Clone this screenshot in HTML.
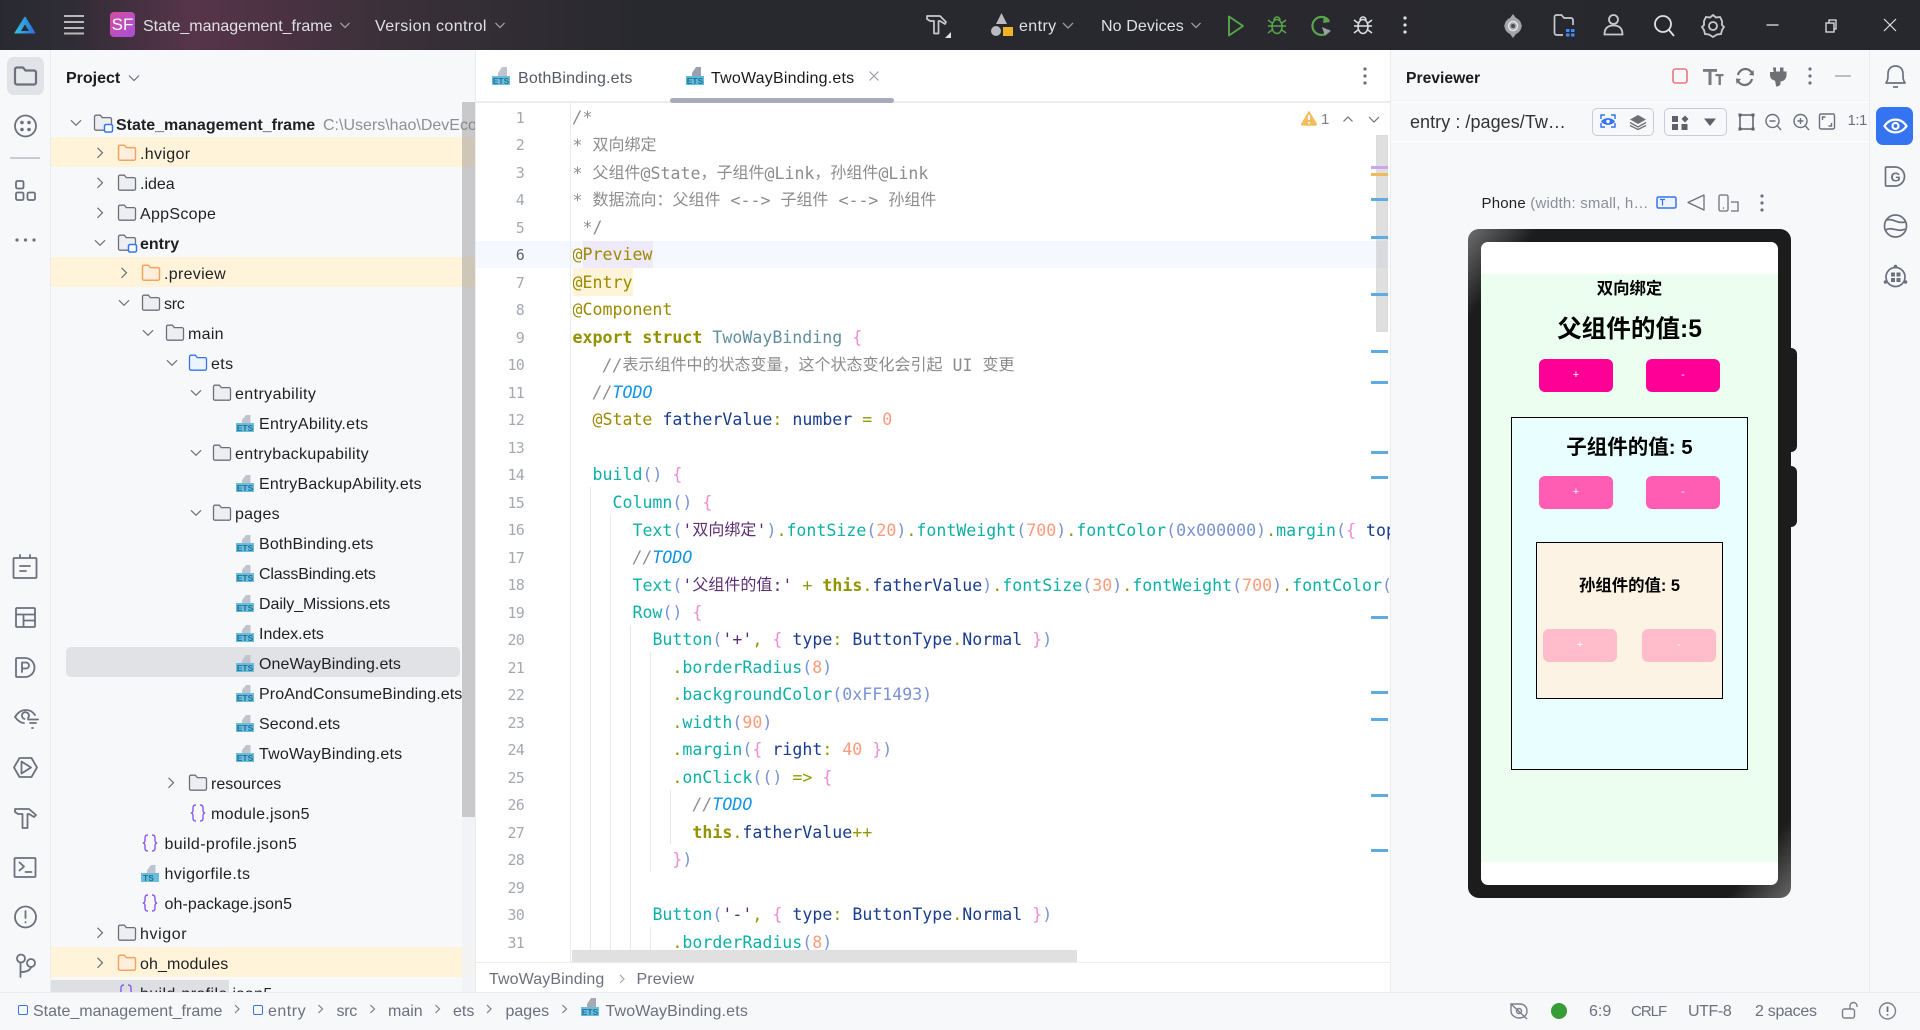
<!DOCTYPE html>
<html><head><meta charset="utf-8"><style>
html,body{margin:0;padding:0;width:1920px;height:1030px;overflow:hidden;background:#f7f8fa;font-family:"Liberation Sans","Noto Sans CJK SC",sans-serif;font-size:16px;color:#1f2024}
div{box-sizing:border-box}
.a{position:absolute}
.tx{position:absolute;white-space:pre;height:30px;line-height:30px}
.top{color:#dfe1e5}
.g{color:#6c707e}
.r{position:absolute;left:51px;width:424px;height:30px;background:#fff3d9}
#code{position:absolute;left:572.5px;top:103.5px;width:817px;height:859px;overflow:hidden;font-family:"DejaVu Sans Mono","Liberation Mono","Noto Sans CJK SC",monospace;font-size:16.6px;color:#1f2024}
.l{height:27.5px;line-height:27.5px;white-space:pre}
.z{font-family:"Noto Sans CJK SC",sans-serif;font-size:16px;position:relative;top:-1px}
.c{color:#8c8c8c}.t{color:#0f94e6;font-style:italic}.cs{color:#8c8c8c;font-style:italic}
.d{color:#9c8a00}.k{color:#939300;font-weight:bold}.tn{color:#5f8f9f}.p{color:#ee8cd0}
.f{color:#0eb0a6}.n{color:#1a3c8f}.o{color:#8f9a00}.m{color:#ff9b7a}.b{color:#7a93d8}.s{color:#5c2d73}
.ln{position:absolute;left:490px;width:34px;text-align:right;height:27.5px;line-height:28px;font-family:"DejaVu Sans Mono",monospace;font-size:15px;letter-spacing:-.8px;color:#a4a8b2}
.mk{position:absolute;left:1371px;width:17px;height:3px;background:#5dade2}
.btn{position:absolute;width:74px;height:33px;border-radius:6px;color:#fff;font-size:11px;line-height:32px;text-align:center}
.ph{position:absolute;font-weight:bold;color:#000;text-align:center;white-space:pre;font-family:"Liberation Sans","Noto Sans CJK SC",sans-serif}
</style></head><body>

<!-- top bar -->
<div class="a" style="left:0;top:0;width:1920px;height:50px;background:linear-gradient(90deg,#292a31 0,#2f2c35 70px,#57344a 190px,#3a3039 390px,#28292f 640px,#27282e 100%)"></div>
<div class="a" style="left:110px;top:12px;width:25px;height:25px;border-radius:4px;background:linear-gradient(135deg,#d44f9f,#a64fd8);color:#fff;text-align:center;line-height:25px;font-size:17px">SF</div>
<div class="tx top" style="left:143px;top:12px">State_management_frame</div>
<div class="tx top" style="left:375px;top:12px;letter-spacing:.4px">Version control</div>
<div class="tx top" style="left:1019px;top:12px;letter-spacing:.4px">entry</div>
<div class="tx top" style="left:1101px;top:12px;letter-spacing:.1px">No Devices</div>

<!-- project panel -->
<div class="a" style="left:0;top:0;width:475px;height:992px;overflow:hidden">
<div class="a" style="left:51px;top:50px;width:424px;height:942px;background:#f7f8fa"></div>
<div class="r" style="top:137.3px"></div><div class="r" style="top:257.3px"></div><div class="r" style="top:947px"></div>
<div class="a" style="left:66px;top:647px;width:394px;height:30px;border-radius:5px;background:#e1e2e6"></div>
<div class="a" style="left:51px;top:980px;width:178px;height:12px;background:#dedfe3"></div>
<div class="tx" style="left:66px;top:64px;font-weight:bold;color:#1a1b1f">Project</div>
<div class="tx" style="left:116px;top:111px;font-weight:bold">State_management_frame</div>
<div class="tx" style="left:323px;top:111px;color:#8c8f98">C:\Users\hao\DevEco</div>
<div class="tx" style="left:140px;top:140px;letter-spacing:.35px">.hvigor</div>
<div class="tx" style="left:140px;top:170px">.idea</div>
<div class="tx" style="left:140px;top:200px;letter-spacing:.3px">AppScope</div>
<div class="tx" style="left:140px;top:230px;font-weight:bold">entry</div>
<div class="tx" style="left:164px;top:260px;letter-spacing:.3px">.preview</div>
<div class="tx" style="left:164px;top:290px;letter-spacing:-.3px">src</div>
<div class="tx" style="left:188px;top:320px;letter-spacing:.3px">main</div>
<div class="tx" style="left:211px;top:350px;letter-spacing:.4px">ets</div>
<div class="tx" style="left:235px;top:380px;letter-spacing:.4px">entryability</div>
<div class="tx" style="left:259px;top:410px;letter-spacing:.3px">EntryAbility.ets</div>
<div class="tx" style="left:235px;top:440px;letter-spacing:.33px">entrybackupability</div>
<div class="tx" style="left:259px;top:470px;letter-spacing:.22px">EntryBackupAbility.ets</div>
<div class="tx" style="left:235px;top:500px;letter-spacing:.25px">pages</div>
<div class="tx" style="left:259px;top:530px;letter-spacing:.16px">BothBinding.ets</div>
<div class="tx" style="left:259px;top:560px;letter-spacing:-.15px">ClassBinding.ets</div>
<div class="tx" style="left:259px;top:590px;letter-spacing:-.07px">Daily_Missions.ets</div>
<div class="tx" style="left:259px;top:620px">Index.ets</div>
<div class="tx" style="left:259px;top:650px;letter-spacing:.07px">OneWayBinding.ets</div>
<div class="tx" style="left:259px;top:680px;letter-spacing:.1px">ProAndConsumeBinding.ets</div>
<div class="tx" style="left:259px;top:710px;letter-spacing:.12px">Second.ets</div>
<div class="tx" style="left:259px;top:740px;letter-spacing:.2px">TwoWayBinding.ets</div>
<div class="tx" style="left:211px;top:770px">resources</div>
<div class="tx" style="left:211px;top:800px;letter-spacing:.3px">module.json5</div>
<div class="tx" style="left:164.5px;top:830px;letter-spacing:.38px">build-profile.json5</div>
<div class="tx" style="left:164.5px;top:860px;letter-spacing:.38px">hvigorfile.ts</div>
<div class="tx" style="left:164.5px;top:890px;letter-spacing:.08px">oh-package.json5</div>
<div class="tx" style="left:140px;top:920px;letter-spacing:.6px">hvigor</div>
<div class="tx" style="left:140px;top:950px;letter-spacing:.12px">oh_modules</div>
<div class="tx" style="left:140px;top:980px;letter-spacing:.38px">build-profile.json5</div>

<svg class="a" style="left:0;top:0" width="475" height="992" font-family="Liberation Sans">
<defs>
<g id="fo"><path d="M-8.5-6.3a1.5 1.5 0 0 1 1.5-1.5h4.3l2 2.4h7.7a1.5 1.5 0 0 1 1.5 1.5v9.6a1.5 1.5 0 0 1-1.5 1.5H-7a1.5 1.5 0 0 1-1.5-1.5z" fill="#edeef2" stroke="#6c707e" stroke-width="1.3"/></g>
<g id="fy"><path d="M-8.5-6.3a1.5 1.5 0 0 1 1.5-1.5h4.3l2 2.4h7.7a1.5 1.5 0 0 1 1.5 1.5v9.6a1.5 1.5 0 0 1-1.5 1.5H-7a1.5 1.5 0 0 1-1.5-1.5z" fill="#fdeedd" stroke="#f2a35e" stroke-width="1.5"/></g>
<g id="fb"><path d="M-8.5-6.3a1.5 1.5 0 0 1 1.5-1.5h4.3l2 2.4h7.7a1.5 1.5 0 0 1 1.5 1.5v9.6a1.5 1.5 0 0 1-1.5 1.5H-7a1.5 1.5 0 0 1-1.5-1.5z" fill="#edf3ff" stroke="#3574f0" stroke-width="1.3"/></g>
<g id="fm"><path d="M-8.5-6.3a1.5 1.5 0 0 1 1.5-1.5h4.3l2 2.4h7.7a1.5 1.5 0 0 1 1.5 1.5v9.6a1.5 1.5 0 0 1-1.5 1.5H-7a1.5 1.5 0 0 1-1.5-1.5z" fill="#edeef2" stroke="#6c707e" stroke-width="1.3"/><rect x="1.5" y="1.5" width="8" height="7.5" rx="1.5" fill="#fff" stroke="#3574f0" stroke-width="1.5"/></g>
<g id="et"><path d="M-3-1V-4L1-9H5.5V-1z" fill="#c0c4cd"/><rect x="-9" y="-1" width="18" height="9" fill="#6cbddb"/><text x="0" y="6.8" font-size="8.5" font-weight="bold" text-anchor="middle" fill="#1d7299">ETS</text></g>
<g id="ts"><path d="M-3-1V-4L1-9H5.5V-1z" fill="#c0c4cd"/><rect x="-9" y="-1" width="18" height="9" fill="#6cbddb"/><text x="-7" y="6.8" font-size="8.5" font-weight="bold" fill="#1d7299">TS</text></g>
<g id="js" fill="none" stroke="#8659f0" stroke-width="1.4"><path d="M-2-8c-2.5 0-3 1.2-3 2.8v2.7c0 1.3-.8 2.5-2.2 2.5 1.4 0 2.2 1.2 2.2 2.5v2.7c0 1.6.5 2.8 3 2.8"/><path d="M2-8c2.5 0 3 1.2 3 2.8v2.7c0 1.3.8 2.5 2.2 2.5-1.4 0-2.2 1.2-2.2 2.5v2.7c0 1.6-.5 2.8-3 2.8"/></g>
<path id="cd" d="M-5-2.5 0 2.5 5-2.5" fill="none" stroke="#6c707e" stroke-width="1.2"/>
<path id="cr" d="M-2.5-5 2.500 0-2.5 5" fill="none" stroke="#6c707e" stroke-width="1.2"/>
</defs>
<use href="#cd" x="134" y="78"/>
<use href="#cd" x="76" y="122.8"/><use href="#cr" x="100" y="152.8"/><use href="#cr" x="100" y="182.8"/><use href="#cr" x="100" y="212.8"/><use href="#cd" x="100" y="242.8"/><use href="#cr" x="124" y="272.8"/><use href="#cd" x="124" y="302.8"/><use href="#cd" x="148" y="332.8"/><use href="#cd" x="172" y="362.8"/><use href="#cd" x="196" y="392.8"/><use href="#cd" x="196" y="452.8"/><use href="#cd" x="196" y="512.8"/><use href="#cr" x="171" y="782.8"/><use href="#cr" x="100" y="932.8"/><use href="#cr" x="100" y="962.8"/>
<use href="#fm" x="103" y="123"/><use href="#fy" x="127" y="153"/><use href="#fo" x="127" y="183"/><use href="#fo" x="127" y="213"/><use href="#fm" x="127" y="243"/><use href="#fy" x="151" y="273"/><use href="#fo" x="151" y="303"/><use href="#fo" x="175" y="333"/><use href="#fb" x="198" y="363"/><use href="#fo" x="222" y="393"/><use href="#fo" x="222" y="453"/><use href="#fo" x="222" y="513"/><use href="#fo" x="198" y="783"/><use href="#fo" x="127" y="933"/><use href="#fy" x="127" y="963"/>
<use href="#et" x="245" y="424"/><use href="#et" x="245" y="484"/><use href="#et" x="245" y="544"/><use href="#et" x="245" y="574"/><use href="#et" x="245" y="604"/><use href="#et" x="245" y="634"/><use href="#et" x="245" y="664"/><use href="#et" x="245" y="694"/><use href="#et" x="245" y="724"/><use href="#et" x="245" y="754"/>
<use href="#js" x="198" y="813"/><use href="#js" x="150" y="843"/><use href="#ts" x="150" y="874"/><use href="#js" x="150" y="903"/><use href="#js" x="126" y="993"/>
</svg>
<div class="a" style="left:462px;top:817px;width:13px;height:175px;background:#f1f2f4;opacity:.85"></div>
<div class="a" style="left:462px;top:102px;width:13px;height:715px;background:rgba(120,120,120,.36)"></div>
</div>

<!-- left strip -->
<div class="a" style="left:0;top:50px;width:51px;height:943px;background:#f7f8fa;border-right:1px solid #ebecf0"></div>
<div class="a" style="left:6.5px;top:57px;width:37px;height:38px;border-radius:7px;background:#e2e3e7"></div>
<div class="a" style="left:10px;top:157px;width:30px;height:1.5px;background:#c9cbd2"></div>

<!-- editor -->
<div class="a" style="left:475px;top:50px;width:915px;height:943px;background:#fff;border-left:1px solid #ebecf0"></div>
<div class="a" style="left:476px;top:101px;width:914px;height:1.5px;background:#ebecf0"></div>
<div class="a" style="left:670px;top:97.5px;width:224px;height:5.5px;border-radius:3px;background:#a7abbc"></div>
<div class="tx" style="left:518px;top:64px;color:#555a66;letter-spacing:.16px">BothBinding.ets</div>
<div class="tx" style="left:711px;top:64px;color:#1a1b1f;letter-spacing:.2px">TwoWayBinding.ets</div>
<div class="a" style="left:476px;top:240.5px;width:913px;height:27px;background:#f5f8fe"></div>
<div class="a" style="left:569.5px;top:103px;width:1px;height:859px;background:#ebecf0"></div>
<div class="a" style="left:582.5px;top:240.5px;width:70px;height:27px;background:#efeaf9"></div>
<div class="a" style="left:572.5px;top:267.5px;width:60px;height:28px;background:#fdf4d9"></div>
<div class="a" style="left:590px;top:487px;width:1px;height:475px;background:#e8e9ee"></div>
<div class="a" style="left:610px;top:515px;width:1px;height:447px;background:#e8e9ee"></div>
<div class="a" style="left:630px;top:625px;width:1px;height:337px;background:#e8e9ee"></div>
<div class="a" style="left:650px;top:652px;width:1px;height:220px;background:#e8e9ee"></div>
<div class="a" style="left:650px;top:927px;width:1px;height:35px;background:#e8e9ee"></div>
<div class="a" style="left:670px;top:790px;width:1px;height:54px;background:#e8e9ee"></div>

<div class="ln" style="top:103.5px">1</div><div class="ln" style="top:131px">2</div><div class="ln" style="top:158.5px">3</div><div class="ln" style="top:186px">4</div><div class="ln" style="top:213.5px">5</div><div class="ln" style="top:241px;color:#5a5f6b">6</div><div class="ln" style="top:268.5px">7</div><div class="ln" style="top:296px">8</div><div class="ln" style="top:323.5px">9</div><div class="ln" style="top:351px">10</div><div class="ln" style="top:378.5px">11</div><div class="ln" style="top:406px">12</div><div class="ln" style="top:433.5px">13</div><div class="ln" style="top:461px">14</div><div class="ln" style="top:488.5px">15</div><div class="ln" style="top:516px">16</div><div class="ln" style="top:543.5px">17</div><div class="ln" style="top:571px">18</div><div class="ln" style="top:598.5px">19</div><div class="ln" style="top:626px">20</div><div class="ln" style="top:653.5px">21</div><div class="ln" style="top:681px">22</div><div class="ln" style="top:708.5px">23</div><div class="ln" style="top:736px">24</div><div class="ln" style="top:763.5px">25</div><div class="ln" style="top:791px">26</div><div class="ln" style="top:818.5px">27</div><div class="ln" style="top:846px">28</div><div class="ln" style="top:873.5px">29</div><div class="ln" style="top:901px">30</div><div class="ln" style="top:928.5px">31</div>

<div id="code">
<div class="l c"><i>/*</i></div>
<div class="l c">* <span class="z">双向绑定</span></div>
<div class="l c">* <span class="z">父组件</span>@State<span class="z">，子组件</span>@Link<span class="z">，孙组件</span>@Link</div>
<div class="l c">* <span class="z">数据流向：父组件</span> &lt;--&gt; <span class="z">子组件</span> &lt;--&gt; <span class="z">孙组件</span></div>
<div class="l c"> */</div>
<div class="l d">@Preview</div>
<div class="l d">@Entry</div>
<div class="l d">@Component</div>
<div class="l"><span class="k">export struct</span> <span class="tn">TwoWayBinding</span> <span class="p">{</span></div>
<div class="l c">   <i>//</i><span class="z">表示组件中的状态变量，这个状态变化会引起</span> UI <span class="z">变更</span></div>
<div class="l">  <span class="cs">//</span><span class="t">TODO</span></div>
<div class="l">  <span class="d">@State</span> <span class="n">fatherValue</span><span class="o">:</span> <span class="n">number</span> <span class="o">=</span> <span class="m">0</span></div>
<div class="l"> </div>
<div class="l">  <span class="f">build</span><span class="b">()</span> <span class="p">{</span></div>
<div class="l">    <span class="f">Column</span><span class="b">()</span> <span class="p">{</span></div>
<div class="l">      <span class="f">Text</span><span class="b">(</span><span class="s">'<span class="z">双向绑定</span>'</span><span class="b">)</span><span class="o">.</span><span class="f">fontSize</span><span class="b">(</span><span class="m">20</span><span class="b">)</span><span class="o">.</span><span class="f">fontWeight</span><span class="b">(</span><span class="m">700</span><span class="b">)</span><span class="o">.</span><span class="f">fontColor</span><span class="b">(0x000000)</span><span class="o">.</span><span class="f">margin</span><span class="b">(</span><span class="p">{</span> <span class="n">top</span><span class="o">:</span> <span class="m">20</span> <span class="p">}</span><span class="b">)</span></div>
<div class="l">      <span class="cs">//</span><span class="t">TODO</span></div>
<div class="l">      <span class="f">Text</span><span class="b">(</span><span class="s">'<span class="z">父组件的值</span>:'</span> <span class="o">+</span> <span class="k">this</span><span class="o">.</span><span class="n">fatherValue</span><span class="b">)</span><span class="o">.</span><span class="f">fontSize</span><span class="b">(</span><span class="m">30</span><span class="b">)</span><span class="o">.</span><span class="f">fontWeight</span><span class="b">(</span><span class="m">700</span><span class="b">)</span><span class="o">.</span><span class="f">fontColor</span><span class="b">(0x000000)</span></div>
<div class="l">      <span class="f">Row</span><span class="b">()</span> <span class="p">{</span></div>
<div class="l">        <span class="f">Button</span><span class="b">(</span><span class="s">'+'</span><span class="o">,</span> <span class="p">{</span> <span class="n">type</span><span class="o">:</span> <span class="n">ButtonType</span><span class="o">.</span><span class="n">Normal</span> <span class="p">}</span><span class="b">)</span></div>
<div class="l">          <span class="o">.</span><span class="f">borderRadius</span><span class="b">(</span><span class="m">8</span><span class="b">)</span></div>
<div class="l">          <span class="o">.</span><span class="f">backgroundColor</span><span class="b">(0xFF1493)</span></div>
<div class="l">          <span class="o">.</span><span class="f">width</span><span class="b">(</span><span class="m">90</span><span class="b">)</span></div>
<div class="l">          <span class="o">.</span><span class="f">margin</span><span class="b">(</span><span class="p">{</span> <span class="n">right</span><span class="o">:</span> <span class="m">40</span> <span class="p">}</span><span class="b">)</span></div>
<div class="l">          <span class="o">.</span><span class="f">onClick</span><span class="b">(()</span> <span class="o">=&gt;</span> <span class="p">{</span></div>
<div class="l">            <span class="cs">//</span><span class="t">TODO</span></div>
<div class="l">            <span class="k">this</span><span class="o">.</span><span class="n">fatherValue</span><span class="o">++</span></div>
<div class="l">          <span class="p">}</span><span class="b">)</span></div>
<div class="l"> </div>
<div class="l">        <span class="f">Button</span><span class="b">(</span><span class="s">'-'</span><span class="o">,</span> <span class="p">{</span> <span class="n">type</span><span class="o">:</span> <span class="n">ButtonType</span><span class="o">.</span><span class="n">Normal</span> <span class="p">}</span><span class="b">)</span></div>
<div class="l">          <span class="o">.</span><span class="f">borderRadius</span><span class="b">(</span><span class="m">8</span><span class="b">)</span></div>
</div>

<div class="a" style="left:1376px;top:135px;width:12px;height:197px;background:rgba(150,150,150,.3);border:1px solid #dcdcdc"></div>
<div class="mk" style="top:166px;background:#cba6ee"></div><div class="mk" style="top:172.5px;background:#f0b95a"></div>
<div class="mk" style="top:197.5px"></div><div class="mk" style="top:236px"></div><div class="mk" style="top:292.5px"></div><div class="mk" style="top:350px"></div><div class="mk" style="top:381px"></div><div class="mk" style="top:451px"></div><div class="mk" style="top:476px"></div><div class="mk" style="top:616px"></div><div class="mk" style="top:691px"></div><div class="mk" style="top:718px"></div><div class="mk" style="top:794px"></div><div class="mk" style="top:849px"></div>
<div class="a" style="left:572px;top:950px;width:505px;height:12px;background:#e0e0e0"></div>
<div class="a" style="left:476px;top:962px;width:914px;height:31px;background:#fff;border-top:1px solid #ebecf0"></div>
<div class="tx g" style="left:489px;top:965px;letter-spacing:.1px">TwoWayBinding</div>
<div class="tx g" style="left:636.5px;top:965px;letter-spacing:.1px">Preview</div>
<div class="tx" style="left:1321px;top:105px;color:#7a7e8a;font-size:15px">1</div>

<!-- previewer -->
<div class="a" style="left:1390px;top:50px;width:480px;height:943px;background:#f7f8fa;border-left:1px solid #ebecf0;border-right:1px solid #ebecf0"></div>
<div class="a" style="left:1391px;top:102px;width:478px;height:1px;background:#fff"></div>
<div class="a" style="left:1391px;top:141px;width:478px;height:1px;background:#fff"></div>
<div class="tx" style="left:1406px;top:64px;font-weight:bold;font-size:15.7px;color:#1a1b1f">Previewer</div>
<div class="tx" style="left:1410px;top:107px;font-size:18px;color:#333;letter-spacing:.05px">entry : /pages/Tw…</div>
<div class="a" style="left:1592px;top:108px;width:62px;height:28px;border:1px solid #c9ccd6;border-radius:5px"></div>
<div class="a" style="left:1664px;top:108px;width:63px;height:28px;border:1px solid #c9ccd6;border-radius:5px"></div>
<div class="tx" style="left:1847.5px;top:106px;color:#6c707e;font-size:15px;letter-spacing:-.5px">1:1</div>
<div class="tx" style="left:1481.5px;top:189px;font-size:15px;color:#222;letter-spacing:.2px">Phone <span style="color:#8a8e99">(width: small, h…</span></div>

<!-- phone -->
<div class="a" style="left:1790px;top:348px;width:7px;height:104px;background:#1c1c1c;border-radius:0 6px 6px 0"></div>
<div class="a" style="left:1790px;top:465.5px;width:7px;height:61px;background:#1c1c1c;border-radius:0 6px 6px 0"></div>
<div class="a" style="left:1468px;top:229px;width:323px;height:669px;border-radius:11px;background:linear-gradient(128deg,#6e6e6e 0,#1c1c1c 55px,#1c1c1c calc(100% - 50px),#666 100%)"></div>
<div class="a" style="left:1481px;top:242px;width:297px;height:643px;border-radius:7px;background:#fff;overflow:hidden"></div>
<div class="a" style="left:1481px;top:274px;width:297px;height:588px;background:#ecfeef"></div>
<div class="ph" style="left:1481px;width:297px;top:279px;font-size:16.4px;line-height:20px">双向绑定</div>
<div class="ph" style="left:1481px;width:297px;top:314px;font-size:24.6px;line-height:32px">父组件的值:5</div>
<div class="btn" style="left:1539px;top:359px;background:#ff0097">+</div>
<div class="btn" style="left:1646px;top:359px;background:#ff0097">-</div>
<div class="a" style="left:1511px;top:417px;width:237px;height:353px;background:#e9ffff;border:1.5px solid #000"></div>
<div class="ph" style="left:1481px;width:297px;top:434px;font-size:20.5px;line-height:28px">子组件的值: 5</div>
<div class="btn" style="left:1539px;top:476px;background:#ff5cb3">+</div>
<div class="btn" style="left:1646px;top:476px;background:#ff5cb3">-</div>
<div class="a" style="left:1536px;top:542px;width:187px;height:157px;background:#fdf3e5;border:1.5px solid #000"></div>
<div class="ph" style="left:1481px;width:297px;top:576px;font-size:16.4px;line-height:20px">孙组件的值: 5</div>
<div class="btn" style="left:1543px;top:629px;background:#ffbccb">+</div>
<div class="btn" style="left:1642px;top:629px;background:#ffbccb">-</div>

<!-- right strip -->
<div class="a" style="left:1876px;top:107px;width:37px;height:38px;border-radius:7px;background:#3574f0"></div>

<!-- status bar -->
<div class="a" style="left:0;top:992px;width:1920px;height:38px;background:#f7f8fa;border-top:1.5px solid #ebecf0"></div>
<div class="a" style="left:18px;top:1005px;width:10px;height:10px;border:1.5px solid #3574f0;border-radius:2px"></div>
<div class="a" style="left:253px;top:1005px;width:10px;height:10px;border:1.5px solid #3574f0;border-radius:2px"></div>
<div class="tx g" style="left:33px;top:997px">State_management_frame</div>
<div class="tx g" style="left:268px;top:997px;letter-spacing:.5px">entry</div>
<div class="tx g" style="left:336.5px;top:997px;letter-spacing:-.3px">src</div>
<div class="tx g" style="left:388px;top:997px">main</div>
<div class="tx g" style="left:453px;top:997px">ets</div>
<div class="tx g" style="left:505.5px;top:997px">pages</div>
<div class="tx g" style="left:605.5px;top:997px;letter-spacing:.15px">TwoWayBinding.ets</div>
<div class="tx g" style="left:1589px;top:997px">6:9</div>
<div class="tx g" style="left:1631px;top:997px;font-size:15px;letter-spacing:-1px">CRLF</div>
<div class="tx g" style="left:1688px;top:997px;letter-spacing:-.4px">UTF-8</div>
<div class="tx g" style="left:1755px;top:997px;letter-spacing:-.3px">2 spaces</div>
<div class="a" style="left:1551px;top:1003px;width:16px;height:16px;border-radius:50%;background:#369c36"></div>

<!-- icon overlay -->
<svg class="a" style="left:0;top:0" width="1920" height="1030" font-family="Liberation Sans">
<defs>
<path id="hm" d="M-10-8H3L9-2 8 0 3-3H1.5V9.5H-3V-3H-7L-10-5z" fill="none" stroke="currentColor" stroke-width="1.7" stroke-linejoin="round"/>
<g id="vd" fill="currentColor"><circle cy="-7" r="1.6"/><circle r="1.6"/><circle cy="7" r="1.6"/></g>
<g id="bug" fill="none" stroke="currentColor" stroke-width="1.5"><ellipse cy="1.5" rx="5" ry="7"/><path d="M-3-5a3 3 0 0 1 6 0M-5 1H5M-9-5-5-2M9-5 5-2M-9 1H-5M9 1H5M-9 8-5 5M9 8 5 5"/></g>
<linearGradient id="lg" x1="0" x2="1" y1="0" y2="0"><stop offset="0" stop-color="#35c0df"/><stop offset="1" stop-color="#2a6fdc"/></linearGradient>
</defs>

<!-- top bar icons -->
<path d="M25 17 35 33H15z" fill="url(#lg)" stroke="url(#lg)" stroke-width="1" stroke-linejoin="round"/><path d="M25 24.500 29 31H21z" fill="#2b2c33"/>
<g stroke="#b9b9bb" stroke-width="2"><path d="M64 16H84M64 22H84M64 28H84M64 33.5H84"/></g>
<g fill="none" stroke="#9a9ca3" stroke-width="1.3"><path d="M340.500 23 345 27.500 349.500 23M495.500 23 500 27.500 504.500 23M1063 23 1068 28 1073 23M1191.500 23 1196 27.500 1200.500 23"/></g>
<use href="#hm" x="937" y="24" color="#c8cad0"/><path d="M951 32V38H945z" fill="#dfe1e5"/>
<path d="M1001.500 13 1007 24H996z" fill="#b9bbc1"/><circle cx="996" cy="31" r="5" fill="#b9bbc1"/><rect x="1003" y="27" width="10" height="9" fill="#f2b320"/>
<path d="M1229 16.500 1243 26 1229 35.500z" fill="none" stroke="#57a64a" stroke-width="1.900" stroke-linejoin="round"/>
<use href="#bug" x="1277" y="25" color="#57a64a"/>
<path d="M1329 21a9 9 0 1 0 .5 9" fill="none" stroke="#57a64a" stroke-width="2.200"/><path d="M1324 16 1330 22 1323 23z" fill="#57a64a"/><path d="M1322 27 1331 31 1327 33 1325 36z" fill="#9ea1a8"/>
<use href="#bug" x="1363" y="25" color="#dfe1e5"/>
<use href="#vd" x="1405" y="25" color="#dfe1e5"/>
<path d="M1513 14 1522 26 1513 38 1504 26z" fill="#a2a4a9"/><circle cx="1513" cy="26" r="8.500" fill="#a2a4a9"/><circle cx="1513" cy="26" r="4.500" fill="none" stroke="#e4e4e6" stroke-width="1.500"/><circle cx="1513" cy="26" r="2" fill="#4a4c52"/>
<path d="M1554.500 17a2 2 0 0 1 2-2h5l2.500 3h7a2 2 0 0 1 2 2v5M1563 35H1556.500a2 2 0 0 1-2-2V17" fill="none" stroke="#c8cad0" stroke-width="1.700"/>
<rect x="1566" y="29" width="3.500" height="3" fill="#3e8df5"/><rect x="1571" y="29" width="3.500" height="3" fill="#3e8df5"/><rect x="1566" y="33.500" width="3.500" height="3" fill="#3e8df5"/><rect x="1571" y="33.500" width="3.500" height="3" fill="#3e8df5"/>
<g fill="none" stroke="#c8cad0" stroke-width="1.800"><circle cx="1613.500" cy="19.500" r="4.500"/><path d="M1604.500 34.500c0-5 2-9 9-9s9 4 9 9z"/></g>
<g fill="none" stroke="#dfe1e5" stroke-width="1.800"><circle cx="1663" cy="24" r="8"/><path d="M1669 30 1674 36"/></g>
<g fill="none" stroke="#c8cad0" stroke-width="1.800"><path d="M1713 15 1716 17.500 1720 17 1722 21 1722 25 1724 27 1722 30 1721 34 1717 34.500 1713 37 1709 34.500 1705 34 1704 30 1702 27 1704 25 1704 21 1706 17 1710 17.500z"/><circle cx="1713" cy="26" r="4"/></g>
<path d="M1766.500 25H1778.500" stroke="#dfe1e5" stroke-width="1.300"/>
<g fill="none" stroke="#dfe1e5" stroke-width="1.300"><rect x="1826" y="23" width="8" height="9"/><path d="M1829 23V20H1836V29H1834"/></g>
<path d="M1884 19 1896 31M1896 19 1884 31" stroke="#dfe1e5" stroke-width="1.200"/>

<!-- left strip icons -->
<g fill="none" stroke="#6c707e" stroke-width="1.800" stroke-linejoin="round" stroke-linecap="round">
<path d="M15 69.500a2 2 0 0 1 2-2h6l2.500 3H34a2 2 0 0 1 2 2v10a2 2 0 0 1-2 2H17a2 2 0 0 1-2-2z" stroke-width="2.200" fill="#e7e8ec"/>
<circle cx="25.500" cy="126" r="10.500"/>
<rect x="16" y="181" width="7.500" height="7.500" rx="1.500"/><rect x="16" y="192.500" width="7.500" height="7.500" rx="1.500"/><rect x="27.500" y="192.500" width="7.500" height="7.500" rx="1.500"/>
<path d="M14.500 558h21a1 1 0 0 1 1 1v18a1 1 0 0 1-1 1h-21a1 1 0 0 1-1-1v-18a1 1 0 0 1 1-1zM20 555v3M30 555v3M20 566H30M20 571H26"/>
<path d="M17 608h17a1 1 0 0 1 1 1v17a1 1 0 0 1-1 1H17a1 1 0 0 1-1-1v-17a1 1 0 0 1 1-1zM16 614.500H35M23.500 614.500V627M23.500 620.500H35"/>
<path d="M17 658h8a9.500 9.500 0 0 1 0 19h-8a1 1 0 0 1-1-1v-17a1 1 0 0 1 1-1zM22 672V662.500h4a3 3 0 0 1 0 6h-4"/>
<path d="M15 717c3-5 7-7 11-7s7 2 9 5M15 717c3 4 6 6 9 6M28 718a3.500 3.500 0 1 0-3.500 1M28 719.500H38M30 723H36M32 728H33"/>
<path d="M14 767.500 19.500 758H31.500L37 767.500 31.500 777H19.500zM21.500 761.500 31 767.500 21.500 773.500z"/>
<path d="M15 809H29L36 815 34 817 29 814H27.500V828H22.500V814H18L15 812z"/>
<path d="M15.500 858h19a1 1 0 0 1 1 1v17a1 1 0 0 1-1 1h-19a1 1 0 0 1-1-1v-17a1 1 0 0 1 1-1zM19.500 862.500 24 866.500 19.500 870.500M25.500 872H31.500"/>
<circle cx="25.500" cy="917" r="10.500"/><path d="M25.500 911V918M25.500 922V922.500"/>
<circle cx="21" cy="958.500" r="4"/><circle cx="31" cy="963" r="4"/><path d="M20.500 962.500V977M20.500 972C26 972 30 971 31 967"/>
</g>
<g fill="#6c707e"><circle cx="22" cy="122.500" r="1.800"/><circle cx="29" cy="122.500" r="1.800"/><circle cx="22" cy="129.500" r="1.800"/><circle cx="29" cy="129.500" r="1.800"/><circle cx="17" cy="240" r="1.600"/><circle cx="25.500" cy="240" r="1.600"/><circle cx="34" cy="240" r="1.600"/></g>

<!-- tab bar + editor -->
<g font-size="8.500" font-weight="bold" text-anchor="middle" fill="#1d7299">
<path d="M498 76V73L502 67H507V76z" fill="#c0c4cd"/><rect x="492" y="76" width="18" height="9" fill="#6cbddb"/><text x="501" y="84">ETS</text>
<path d="M692 76V73L696 67H701V76z" fill="#9aa0ad"/><rect x="686" y="76" width="18" height="9" fill="#62b8d8"/><text x="695" y="84">ETS</text>
</g>
<path d="M869.500 71.500 878.500 80.500M878.500 71.500 869.500 80.500" stroke="#9a9ea8" stroke-width="1.200"/>
<use href="#vd" x="1365" y="76" color="#6c707e"/>
<path d="M1309 111.500 1316.500 124a1 1 0 0 1-1 1.200H1302.500a1 1 0 0 1-1-1.200z" fill="#f2bd5b" stroke="#f2bd5b" stroke-linejoin="round"/><path d="M1309 115V120M1309 122V123.500" stroke="#fff" stroke-width="2"/>
<g fill="none" stroke="#6c707e" stroke-width="1.200"><path d="M1343.500 121.500 1348 117 1352.500 121.500M1369 117 1374 122 1379 117"/></g>
<path d="M620 975 624 979 620 983" fill="none" stroke="#a0a4ad" stroke-width="1.200"/>

<!-- previewer icons -->
<rect x="1673" y="69" width="14" height="14" rx="2.500" fill="none" stroke="#e5777f" stroke-width="1.600"/>
<g fill="#787a80"><rect x="1703" y="69" width="14" height="2.800"/><rect x="1708.500" y="69" width="3" height="16"/><rect x="1715.500" y="74" width="8" height="2.200"/><rect x="1718.500" y="74" width="2.400" height="11"/></g>
<g fill="none" stroke="#6e7076" stroke-width="2.200"><path d="M1738 75a7.500 7.500 0 0 1 14-2M1752 79a7.500 7.500 0 0 1-14 2"/></g><path d="M1749 75 1754 75.500 1753.500 70zM1741 79 1736 78.500 1736.500 84z" fill="#6e7076"/>
<path d="M1773 68H1775.500V72H1780.500V68H1783V72H1786V75C1786 79 1783 81 1780 81V84C1780 85 1778 86 1776 86" fill="#6e7076" stroke="#6e7076"/><path d="M1770 72H1778V81C1773 81 1770 79 1770 75z" fill="#6e7076"/>
<use href="#vd" x="1810" y="76" color="#6c707e"/>
<path d="M1835 76H1851" stroke="#a8abb3" stroke-width="1.500"/>
<g fill="none" stroke="#3574f0" stroke-width="1.500"><path d="M1601 119V115H1605M1611 115H1615V119M1601 123V127H1605M1611 127H1615V123"/></g>
<path d="M1601 121.500C1604 117 1612 117 1615 121.500 1612 126 1604 126 1601 121.500z" fill="#3574f0"/><circle cx="1608" cy="121.500" r="1.700" fill="#fff"/>
<path d="M1638 115 1646 119.500 1638 124 1630 119.500z" fill="#6e7076"/><g fill="none" stroke="#6e7076" stroke-width="1.300"><path d="M1630 122.500 1638 127 1646 122.500M1630 125.500 1638 129.500 1646 125.500"/></g>
<g fill="#5d6068"><rect x="1672" y="116" width="6" height="6"/><path d="M1685 115.500 1688.500 119 1685 122.500 1681.500 119z"/><rect x="1672" y="124" width="6" height="6"/><rect x="1681.500" y="124" width="6" height="6"/><path d="M1704 118.500H1716L1710 126z"/></g>
<g fill="none" stroke="#5d6068" stroke-width="1.500"><rect x="1740" y="115" width="13" height="14"/></g><g fill="#5d6068"><rect x="1738.500" y="113.500" width="3" height="3"/><rect x="1751.500" y="113.500" width="3" height="3"/><rect x="1738.500" y="127.500" width="3" height="3"/><rect x="1751.500" y="127.500" width="3" height="3"/></g>
<g fill="none" stroke="#6c707e" stroke-width="1.400"><circle cx="1772.500" cy="121" r="6.500"/><path d="M1769.500 121H1775.500M1777.500 126 1781 130"/><circle cx="1800.500" cy="121" r="6.500"/><path d="M1797.500 121H1803.500M1800.500 118V124M1805.500 126 1809 130"/><rect x="1819.500" y="114" width="15" height="15" rx="1.500"/><path d="M1822.500 120V117H1825.500M1831.500 123V126H1828.500"/></g>
<rect x="1657" y="197" width="19" height="11" rx="1.500" fill="#edf3ff" stroke="#3574f0" stroke-width="1.500"/><path d="M1660 199.500H1665M1662.500 199.500V205.500" stroke="#3574f0" stroke-width="1.200"/>
<path d="M1688 202.500 1704 195V210z" fill="none" stroke="#6c707e" stroke-width="1.300" stroke-linejoin="round"/>
<g fill="none" stroke="#6c707e" stroke-width="1.300"><rect x="1719" y="195" width="9" height="16" rx="1.500"/><path d="M1731 202H1738V211H1731"/></g><circle cx="1723.500" cy="208" r=".8" fill="#6c707e"/>
<use href="#vd" x="1762" y="203" color="#6c707e"/>

<!-- right strip icons -->
<g fill="none" stroke="#6c707e" stroke-width="1.700" stroke-linejoin="round">
<path d="M1886 83C1888 80 1888 78 1888 74 1888 69 1891 66 1895.500 66 1900 66 1903 69 1903 74 1903 78 1903 80 1905 83z"/><path d="M1893 87H1898"/>
<path d="M1886.500 167H1895a9.500 9.500 0 0 1 0 19H1886.500a1 1 0 0 1-1-1v-17a1 1 0 0 1 1-1z"/>
<circle cx="1895.500" cy="226" r="11"/><path d="M1886 220C1894 218 1896 224 1906 222M1885.500 230C1893 226 1897 233 1905 229"/>
<circle cx="1895.500" cy="277" r="9.500"/><circle cx="1895.500" cy="266.500" r=".8"/>
</g>
<text x="1895.500" y="181.500" font-size="13" font-weight="bold" fill="#6c707e" text-anchor="middle">G</text>
<g fill="#6c707e"><rect x="1891" y="272.500" width="4" height="4"/><rect x="1896.500" y="272.500" width="4" height="4"/><rect x="1891" y="278" width="4" height="4"/><rect x="1896.500" y="278" width="4" height="4"/><circle cx="1895.500" cy="266.500" r="1.800"/><circle cx="1885.500" cy="282" r="1.800"/><circle cx="1905.500" cy="282" r="1.800"/></g>
<path d="M1884.500 126C1890 117.500 1901 117.500 1906.500 126 1901 134.500 1890 134.500 1884.500 126z" fill="none" stroke="#fff" stroke-width="2.200"/><circle cx="1895.500" cy="126" r="3" fill="none" stroke="#fff" stroke-width="2.200"/>

<!-- status bar icons -->
<g fill="none" stroke="#7b7f8a" stroke-width="1.200">
<path d="M235 1005 239 1009 235 1013M318.500 1005 322.500 1009 318.500 1013M370.500 1005 374.500 1009 370.500 1013M435.500 1005 439.500 1009 435.500 1013M487 1005 491 1009 487 1013M562.500 1005 566.500 1009 562.500 1013"/>
</g>
<g font-size="8.500" font-weight="bold" text-anchor="middle" fill="#1d7299"><path d="M587 1007V1004L591 998H596V1007z" fill="#a5aab5"/><rect x="581" y="1007" width="18" height="9" fill="#6cbddb"/><text x="590" y="1015">ETS</text></g>
<g fill="none" stroke="#7b7f8a" stroke-width="1.400">
<path d="M1511 1004H1520C1525 1004 1527 1008 1527 1011 1527 1015 1524 1018 1519 1018 1515 1018 1511 1015 1511 1011zM1511 1004 1527 1019"/><circle cx="1519" cy="1011" r="2.500"/>
<rect x="1842.500" y="1009" width="12" height="9" rx="2"/><path d="M1850 1009V1006a3.500 3.500 0 0 1 7 0V1007"/>
<circle cx="1887.500" cy="1011" r="8"/>
</g>
<path d="M1887.500 1006.500V1012M1887.500 1014V1015.500" stroke="#6c707e" stroke-width="1.800"/>
</svg>
</body></html>
